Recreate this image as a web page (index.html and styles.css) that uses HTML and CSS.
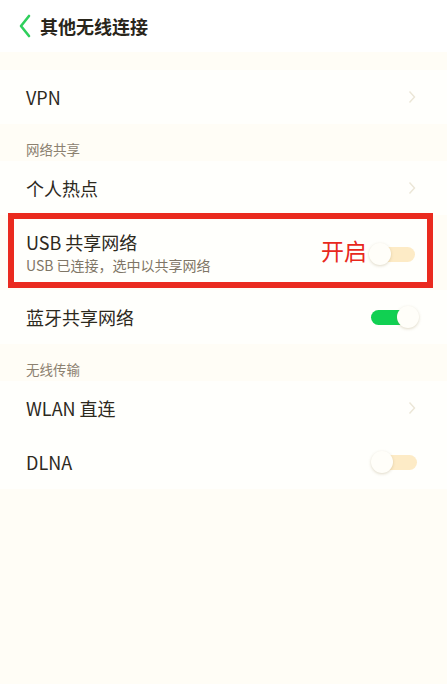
FILE: index.html
```html
<!DOCTYPE html>
<html lang="zh-CN">
<head>
<meta charset="UTF-8" />
<meta name="viewport" content="width=device-width, initial-scale=1" />
<title>其他无线连接</title>
<link rel="stylesheet" href="styles.css">
</head>
<body>

<div class="top-bar">
  <svg class="back" width="14" height="24" viewBox="0 0 14 24">
    <path d="M11 2 L3 12 L11 22" fill="none" stroke="#2fcf5c" stroke-width="2.6" stroke-linecap="round" stroke-linejoin="round"/>
  </svg>
  <span class="title">其他无线连接</span>
</div>

<div class="content">
  <div class="gap"></div>

  <div class="row">
    <span class="row-title">VPN</span>
    <svg class="chev" width="8" height="14" viewBox="0 0 8 14"><path d="M1.5 1.5 L6.5 7 L1.5 12.5" fill="none" stroke="#ebe6d6" stroke-width="1.4"/></svg>
  </div>

  <div class="section">网络共享</div>

  <div class="row">
    <span class="row-title">个人热点</span>
    <svg class="chev" width="8" height="14" viewBox="0 0 8 14"><path d="M1.5 1.5 L6.5 7 L1.5 12.5" fill="none" stroke="#ebe6d6" stroke-width="1.4"/></svg>
  </div>

  <div class="usb-row">
    <div class="usb-text">
      <div class="row-title">USB 共享网络</div>
      <div class="row-sub">USB 已连接，选中以共享网络</div>
    </div>
    <span class="note">开启</span>
    <span class="toggle"><span class="track"></span><span class="knob"></span></span>
  </div>

  <div class="row">
    <span class="row-title">蓝牙共享网络</span>
    <span class="toggle on"><span class="track"></span><span class="knob"></span></span>
  </div>

  <div class="section">无线传输</div>

  <div class="row">
    <span class="row-title">WLAN 直连</span>
    <svg class="chev" width="8" height="14" viewBox="0 0 8 14"><path d="M1.5 1.5 L6.5 7 L1.5 12.5" fill="none" stroke="#ebe6d6" stroke-width="1.4"/></svg>
  </div>

  <div class="row">
    <span class="row-title">DLNA</span>
    <span class="toggle"><span class="track"></span><span class="knob"></span></span>
  </div>
</div>

</body>
</html>
```

FILE: styles.css
```css
body {
  margin: 0;
  padding: 0;
  background-color: #fffdf7;
  color: #2d291d;
  font-family: "Noto Sans CJK SC", "Noto Sans", sans-serif;
}

.top-bar {
  height: 52px;
  background-color: #fff;
  display: flex;
  align-items: center;
  padding-left: 18px;
}

.back {
  margin-right: 8px;
}

.title {
  font-size: 18px;
  font-weight: 700;
  color: #29251a;
}

.content {
  min-height: 632px;
  background-color: #fffdf6;
}

.gap {
  height: 18px;
}

.row {
  height: 54px;
  display: flex;
  align-items: center;
  justify-content: space-between;
  padding: 0 28px 0 26px;
  background-color: #fffffc;
}

.row-title {
  font-size: 18px;
  line-height: 24px;
}

.chev {
  margin-right: 3px;
}

.section {
  height: 37px;
  box-sizing: border-box;
  padding: 16px 26px 0;
  font-size: 13.5px;
  line-height: 18px;
  color: #8c8170;
}

.usb-row {
  display: flex;
  align-items: center;
  margin: -2px 14px 2px 8px;
  padding: 11px 10px 8px 12px;
  border: 6px solid #ea2a1e;
  background-color: #fffffc;
}

.usb-text {
  flex: 1;
}

.row-sub {
  margin-top: 2px;
  font-size: 14px;
  line-height: 18px;
  color: #7f7666;
}

.note {
  margin-top: -4px;
  margin-right: 2px;
  font-size: 23px;
  line-height: 30px;
  color: #e8281c;
}

.toggle {
  position: relative;
  width: 48px;
  height: 22px;
}

.track {
  position: absolute;
  left: 3px;
  right: 2px;
  top: 4px;
  bottom: 3px;
  border-radius: 8px;
  background-color: #fdebc6;
}

.knob {
  position: absolute;
  left: 0;
  top: 0;
  width: 22px;
  height: 22px;
  border-radius: 50%;
  background-color: #fffef9;
  box-shadow: 0 1px 3px rgba(150, 130, 80, 0.3);
}

.toggle.on .track {
  left: 0;
  right: 8px;
  background-color: #11d052;
}

.toggle.on .knob {
  left: auto;
  right: 0;
}

.usb-row .toggle {
  margin-top: 4px;
}
```
